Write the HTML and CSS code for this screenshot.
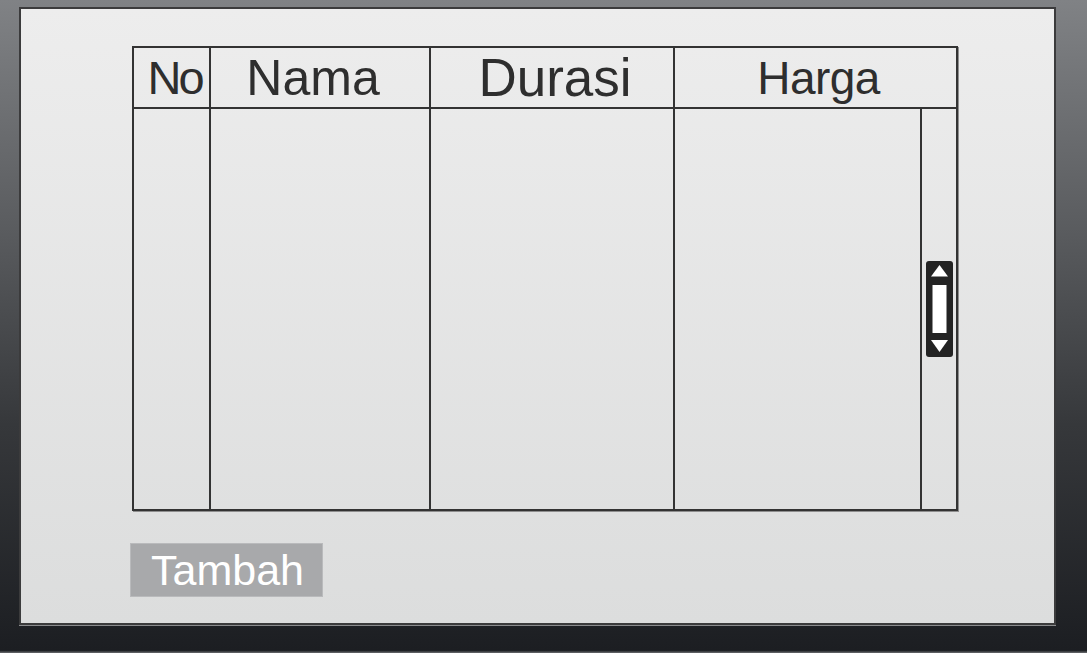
FILE: index.html
```html
<!DOCTYPE html>
<html>
<head>
<meta charset="utf-8">
<link rel="stylesheet" href="styles.css">
</head>
<body>
<div class="panel">
  <div class="table">
    <div class="hcell no">No</div>
    <div class="hcell nama">Nama</div>
    <div class="hcell durasi">Durasi</div>
    <div class="hcell harga">Harga</div>
    <div class="bcell"></div>
    <div class="bcell"></div>
    <div class="bcell"></div>
    <div class="bcell"></div>
    <div class="bcell scroll">
      <svg width="27" height="96" viewBox="0 0 27 96">
        <rect x="0" y="0" width="27" height="96" rx="3" fill="#232323"/>
        <polygon points="13.5,4 22,15.5 5,15.5" fill="#ffffff"/>
        <rect x="6.5" y="24" width="14" height="48" fill="#ffffff"/>
        <polygon points="5,79 22,79 13.5,91" fill="#ffffff"/>
      </svg>
    </div>
  </div>
  <div class="btn">Tambah</div>
</div>
</body>
</html>
```

FILE: styles.css
```css
html, body {
  margin: 0;
  padding: 0;
}
body {
  width: 1087px;
  height: 653px;
  box-sizing: border-box;
  padding: 7px 0 0 19px;
  background: linear-gradient(#808285 0%, #5a5c5f 35%, #36383b 65%, #1c1e22 99.6%, #6b6d70 100%);
  font-family: "Liberation Sans", Arial, sans-serif;
  overflow: hidden;
}
.panel {
  width: 1037px;
  height: 618px;
  box-sizing: border-box;
  border: 2px solid #3b3b3c;
  background: linear-gradient(#ededed, #dcdddd);
  padding: 37px 0 0 111px;
  box-shadow: 0 1px 0 #8a8b8d;
}
.table {
  width: 826px;
  height: 465px;
  box-sizing: border-box;
  border: 2px solid #333333;
  box-shadow: 1px 1px 0 #8e8e8e;
  display: grid;
  grid-template-columns: 77px 220px 244px 247px 34px;
  grid-template-rows: 61px 400px;
}
.hcell {
  border-bottom: 2px solid #333333;
  border-right: 2px solid #333333;
  display: flex;
  align-items: center;
  justify-content: center;
  color: #2e2e2e;
  line-height: 1;
}
.hcell.no {
  font-size: 47px;
  letter-spacing: -3px;
  padding-left: 6px;
}
.hcell.nama {
  font-size: 50px;
  padding-right: 14px;
}
.hcell.durasi {
  font-size: 53px;
  padding-left: 6px;
}
.hcell.harga {
  grid-column: span 2;
  border-right: none;
  font-size: 46px;
  letter-spacing: -0.6px;
  padding-left: 6px;
}
.bcell {
  border-right: 2px solid #333333;
}
.bcell.scroll {
  border-right: none;
  display: flex;
  align-items: center;
  justify-content: center;
}
.scroll svg {
  display: block;
}
.btn {
  margin: 32px 0 0 -2px;
  width: 193px;
  height: 54px;
  box-sizing: border-box;
  border: 1px solid #b9babc;
  background: #a8a9ab;
  color: #ffffff;
  font-size: 43px;
  line-height: 52px;
  padding-left: 20px;
}
```
